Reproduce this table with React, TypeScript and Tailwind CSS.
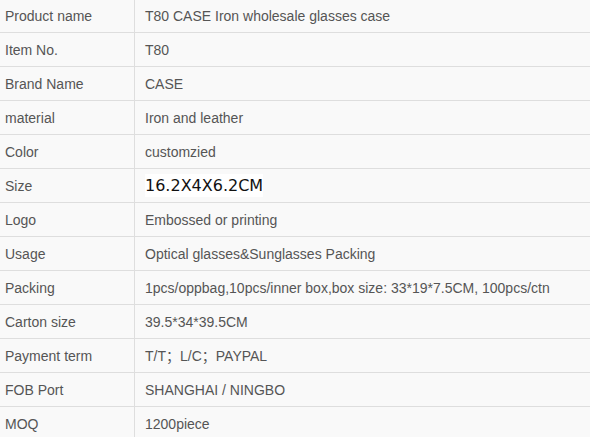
const rows: [string, string][] = [
  ['Product name', 'T80 CASE Iron wholesale glasses case'],
  ['Item No.', 'T80'],
  ['Brand Name', 'CASE'],
  ['material', 'Iron and leather'],
  ['Color', 'customzied'],
  ['Size', '16.2X4X6.2CM'],
  ['Logo', 'Embossed or printing'],
  ['Usage', 'Optical glasses&Sunglasses Packing'],
  ['Packing', '1pcs/oppbag,10pcs/inner box,box size: 33*19*7.5CM, 100pcs/ctn'],
  ['Carton size', '39.5*34*39.5CM'],
  ['Payment term', 'T/T；L/C；PAYPAL'],
  ['FOB Port', 'SHANGHAI / NINGBO'],
  ['MOQ', '1200piece'],
];

export default function App() {
  return (
    <div className="w-[590px] h-[437px] overflow-hidden bg-[#f9f9f9] text-[14px] text-[#555] font-['Liberation_Sans',Arial,'Noto_Sans_CJK_SC',sans-serif]">
      <div className="-mt-px flex flex-col">
        {rows.map(([label, value]) => (
          <div key={label} className="flex h-[34px] border-b border-[#dedede]">
            <div className="w-[135px] shrink-0 flex items-center pl-[5px] pt-[2px] border-r border-[#dedede]">{label}</div>
            {label === 'Size' ? (
              <div className="flex-1 flex items-center pl-[10px] whitespace-nowrap">
                <span className="bg-white text-[#111] text-[16px] leading-[23px] font-['DejaVu_Sans',sans-serif]">
                  {value}
                </span>
              </div>
            ) : (
              <div className="flex-1 flex items-center pl-[10px] pt-[2px] whitespace-nowrap">{value}</div>
            )}
          </div>
        ))}
      </div>
    </div>
  );
}
